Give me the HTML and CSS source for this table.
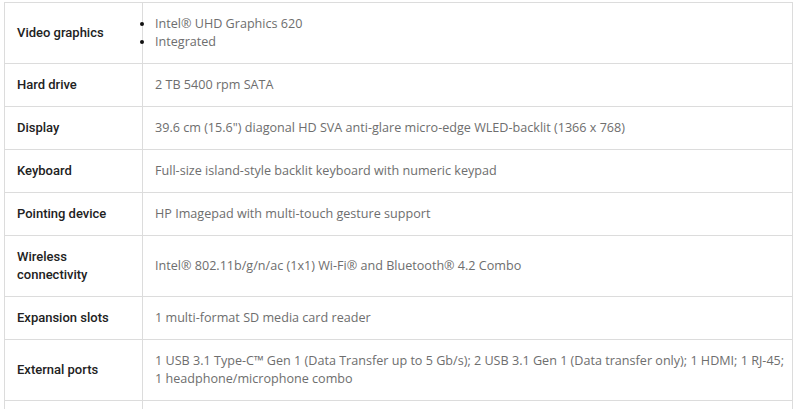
FILE: index.html
```html
<!DOCTYPE html>
<html>
<head>
<meta charset="utf-8">
<link rel="stylesheet" href="styles.css">
</head>
<body>
<table class="specs">
  <tr>
    <th>Video graphics</th>
    <td><ul class="items"><li>Intel® UHD Graphics 620</li><li>Integrated</li></ul></td>
  </tr>
  <tr>
    <th>Hard drive</th>
    <td>2 TB 5400 rpm SATA</td>
  </tr>
  <tr>
    <th>Display</th>
    <td>39.6 cm (15.6") diagonal HD SVA anti-glare micro-edge WLED-backlit (1366 x 768)</td>
  </tr>
  <tr>
    <th>Keyboard</th>
    <td>Full-size island-style backlit keyboard with numeric keypad</td>
  </tr>
  <tr>
    <th>Pointing device</th>
    <td>HP Imagepad with multi-touch gesture support</td>
  </tr>
  <tr>
    <th>Wireless connectivity</th>
    <td>Intel® 802.11b/g/n/ac (1x1) Wi-Fi® and Bluetooth® 4.2 Combo</td>
  </tr>
  <tr>
    <th>Expansion slots</th>
    <td>1 multi-format SD media card reader</td>
  </tr>
  <tr>
    <th>External ports</th>
    <td>1 USB 3.1 Type-C™ Gen 1 (Data Transfer up to 5 Gb/s); 2 USB 3.1 Gen 1 (Data transfer only); 1 HDMI; <span class="nowrap">1 RJ-45;</span> 1 headphone/microphone combo</td>
  </tr>
  <tr class="next">
    <th></th>
    <td></td>
  </tr>
</table>
</body>
</html>
```

FILE: styles.css
```css
html, body {
  margin: 0;
  padding: 0;
  background: #fff;
  overflow: hidden;
}
body {
  padding: 2px 0 0 4px;
  font-family: "Open Sans", "Noto Sans", sans-serif;
}
.specs {
  border-collapse: collapse;
  width: 789px;
  table-layout: fixed;
}
.specs th, .specs td {
  border: 1px solid #dcdcdc;
  padding: 12px 12px 12px 12px;
  line-height: 18px;
  vertical-align: middle;
  text-align: left;
}
.specs th {
  width: 113px;
  font-family: Roboto, "Open Sans", sans-serif;
  font-size: 13px;
  font-weight: 500;
  color: #222;
}
.specs td {
  padding-right: 4px;
  font-size: 12.6px;
  font-weight: 400;
  color: #6e6e6e;
}
.specs .next th, .specs .next td {
  height: 18px;
}
.nowrap {
  white-space: nowrap;
}
.items {
  margin: 0;
  padding: 0;
  list-style: disc outside;
}
.items li::marker {
  color: #111;
}
```
